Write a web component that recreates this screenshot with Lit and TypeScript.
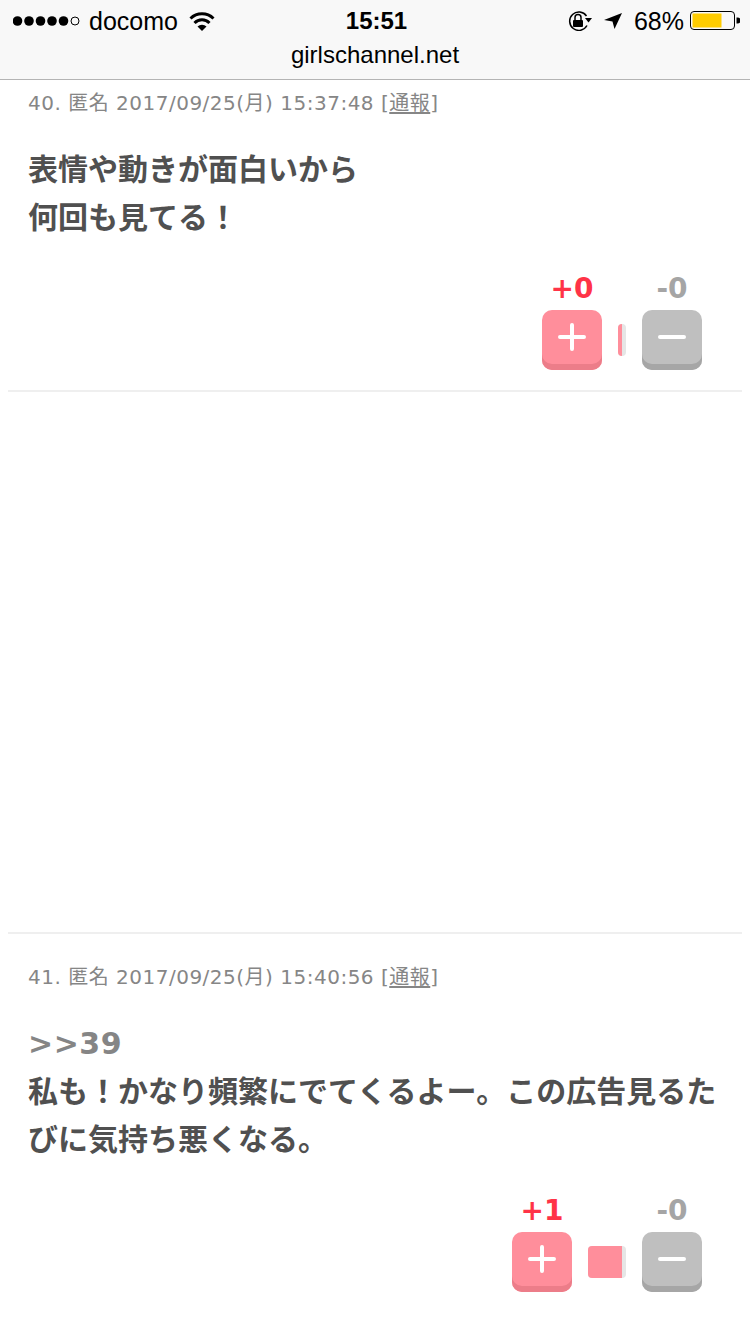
import { css, html, LitElement } from "lit";
import { customElement } from "lit/decorators.js";

const comments = [
  {
    no: 40,
    date: "2017/09/25(月) 15:37:48",
    lines: ["表情や動きが面白いから", "何回も見てる！"],
    plus: 0,
    minus: 0,
    barPink: 4,
  },
  {
    no: 41,
    date: "2017/09/25(月) 15:40:56",
    anchor: ">>39",
    lines: ["私も！かなり頻繁にでてくるよー。この広告見るた", "びに気持ち悪くなる。"],
    plus: 1,
    minus: 0,
    barPink: 34,
  },
];

@customElement("app-root")
export class AppRoot extends LitElement {
  static styles = css`
    :host {
      display: block;
      width: 750px;
      height: 1334px;
      overflow: hidden;
      background: #fff;
      font-family: "DejaVu Sans", "Noto Sans CJK JP", sans-serif;
    }

    .top {
      height: 79px;
      background: #f8f8f8;
      border-bottom: 1px solid #b4b4b4;
      font-family: "Liberation Sans", sans-serif;
      color: #000;
    }

    .status {
      height: 42px;
      display: grid;
      grid-template-columns: 1fr auto 1fr;
      align-items: center;
      padding: 0 10px 0 13px;
    }

    .status-left, .status-right {
      display: flex;
      align-items: center;
    }

    .status-right {
      justify-content: flex-end;
    }

    .carrier {
      font-size: 25px;
      margin-left: 9px;
    }

    .wifi {
      margin-left: 11px;
    }

    .location {
      margin-left: 12px;
    }

    .battery {
      margin-left: 6px;
    }

    .time {
      font-size: 24px;
      font-weight: bold;
    }

    .pct {
      font-size: 25px;
      margin-left: 12px;
    }

    .url {
      text-align: center;
      font-size: 24px;
      line-height: 26px;
    }

    .comment {
      margin: 0 8px;
      padding: 0 20px;
    }

    .first {
      height: 312px;
      border-bottom: 2px solid #efefef;
      box-sizing: border-box;
    }

    .second {
      margin-top: 540px;
      border-top: 2px solid #efefef;
      padding-top: 30px;
    }

    .meta {
      font-size: 20px;
      letter-spacing: 0.5px;
      line-height: 26px;
      color: #868686;
      white-space: nowrap;
    }

    .first .meta {
      padding-top: 10px;
    }

    .meta u {
      text-underline-offset: 2px;
    }

    .body {
      margin-top: 30px;
      font-size: 30px;
      font-weight: bold;
      line-height: 48px;
      color: #505050;
      white-space: nowrap;
    }

    .anchor {
      color: #858585;
      letter-spacing: 0.5px;
    }

    .votes {
      display: flex;
      justify-content: flex-end;
      align-items: flex-end;
      gap: 16px;
      margin: 31px 20px 0 0;
    }

    .vote {
      display: flex;
      flex-direction: column;
      align-items: center;
      gap: 5px;
    }

    .count {
      font-size: 28px;
      font-weight: bold;
      line-height: 32px;
    }

    .count.up {
      color: #ff3347;
    }

    .count.down {
      color: #a5a5a5;
    }

    .btn {
      width: 60px;
      height: 60px;
      border-radius: 10px;
      display: flex;
      align-items: center;
      justify-content: center;
      padding-bottom: 6px;
      box-sizing: border-box;
    }

    .btn.up {
      background: #ff8e9b;
      box-shadow: inset 0 -6px 0 #ec7d89;
    }

    .btn.down {
      background: #bfbfbf;
      box-shadow: inset 0 -6px 0 #a6a6a6;
    }

    .bar {
      display: flex;
      height: 32px;
      margin-bottom: 14px;
      border-radius: 4px;
      overflow: hidden;
      background: #e6e6e6;
      padding-right: 4px;
    }

    .bar i {
      display: block;
      background: #ff8e9b;
    }
  `;

  renderStatus() {
    return html`
      <div class="status">
        <div class="status-left">
          <svg width="67" height="10" viewBox="0 0 67 10">
            <circle cx="4.5" cy="5" r="4.8" fill="#000"></circle>
            <circle cx="16" cy="5" r="4.8" fill="#000"></circle>
            <circle cx="27.5" cy="5" r="4.8" fill="#000"></circle>
            <circle cx="39" cy="5" r="4.8" fill="#000"></circle>
            <circle cx="50.5" cy="5" r="4.8" fill="#000"></circle>
            <circle cx="62" cy="5" r="4" fill="none" stroke="#000" stroke-width="1"></circle>
          </svg>
          <span class="carrier">docomo</span>
          <svg class="wifi" width="26" height="19" viewBox="0 0 26 19">
            <path d="M13 19 L8.5 14.5 A6.5 6.5 0 0 1 17.5 14.5 Z" fill="#000"></path>
            <path d="M5.5 11 A10.5 10.5 0 0 1 20.5 11" fill="none" stroke="#000" stroke-width="3"></path>
            <path d="M1.5 6.5 A16.5 16.5 0 0 1 24.5 6.5" fill="none" stroke="#000" stroke-width="3"></path>
          </svg>
        </div>
        <div class="time">15:51</div>
        <div class="status-right">
          <svg width="24" height="20" viewBox="0 0 24 20">
            <path d="M19 14.5 A9.2 9.2 0 1 1 18.5 5" fill="none" stroke="#000" stroke-width="1.5"></path>
            <path d="M17 7 L24 7 L20.5 11.5 Z" fill="#000"></path>
            <rect x="5" y="9" width="10" height="7" rx="1" fill="#000"></rect>
            <path d="M7 9 V6.5 A3 3 0 0 1 13 6.5 V9" fill="none" stroke="#000" stroke-width="1.5"></path>
          </svg>
          <svg class="location" width="18" height="16" viewBox="0 0 18 16">
            <path d="M18 0 L10.5 16 L8.5 8.5 L0 7 Z" fill="#000"></path>
          </svg>
          <span class="pct">68%</span>
          <svg class="battery" width="50" height="20" viewBox="0 0 50 20">
            <rect x="0.5" y="0.5" width="44" height="18" rx="3.5" fill="none" stroke="#000" stroke-width="1"></rect>
            <rect x="2.5" y="2.5" width="29" height="14" fill="#ffcc00"></rect>
            <path d="M46.5 6.5 H47.5 A3 3 0 0 1 47.5 12.5 H46.5 Z" fill="#000"></path>
          </svg>
        </div>
      </div>
      <div class="url">girlschannel.net</div>
    `;
  }

  renderComment(c: any, cls: string) {
    return html`
      <div class="comment ${cls}">
        <div class="meta">${c.no}. 匿名 ${c.date} [<u>通報</u>]</div>
        <div class="body">
          ${c.anchor ? html`<div class="anchor">${c.anchor}</div>` : ""}
          ${c.lines.map((l: string) => html`<div>${l}</div>`)}
        </div>
        <div class="votes">
          <div class="vote">
            <span class="count up">+${c.plus}</span>
            <div class="btn up">
              <svg width="28" height="28" viewBox="0 0 28 28">
                <path d="M2 14 H26 M14 2 V26" stroke="#fff" stroke-width="4" stroke-linecap="round"></path>
              </svg>
            </div>
          </div>
          <div class="bar"><i style="width:${c.barPink}px"></i></div>
          <div class="vote">
            <span class="count down">-${c.minus}</span>
            <div class="btn down">
              <svg width="28" height="28" viewBox="0 0 28 28">
                <path d="M2 14 H26" stroke="#fff" stroke-width="4" stroke-linecap="round"></path>
              </svg>
            </div>
          </div>
        </div>
      </div>
    `;
  }

  render() {
    return html`
      <div class="top">${this.renderStatus()}</div>
      ${this.renderComment(comments[0], "first")}
      ${this.renderComment(comments[1], "second")}
    `;
  }
}
